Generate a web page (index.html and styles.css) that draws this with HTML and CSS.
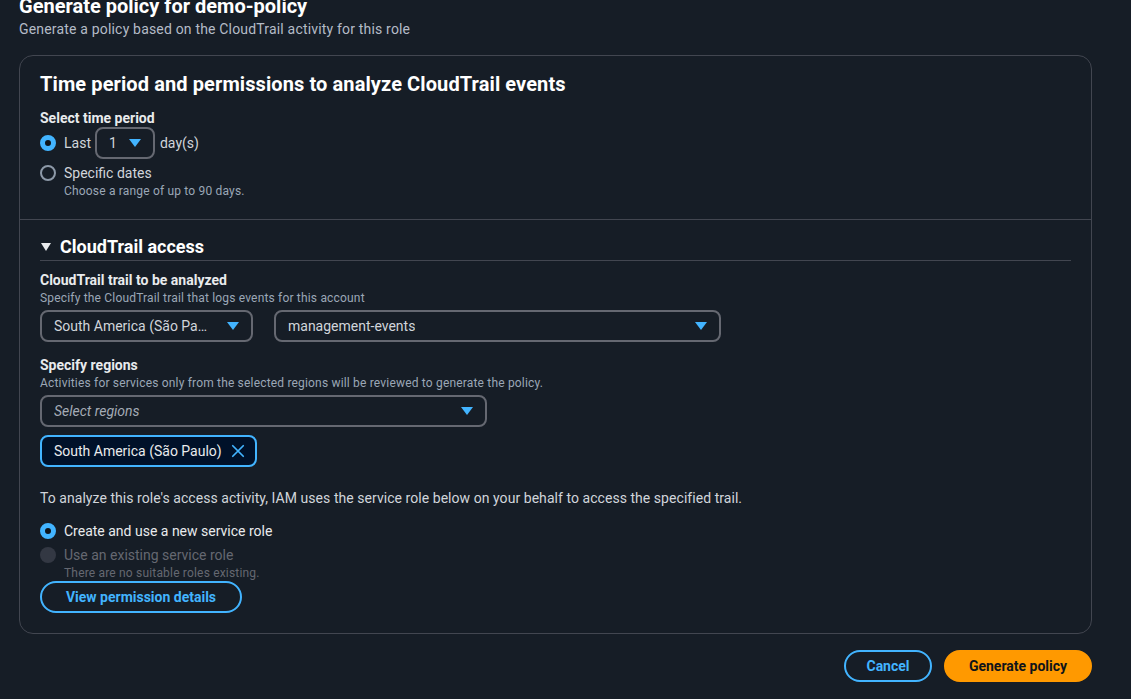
FILE: index.html
```html
<!DOCTYPE html>
<html lang="en">
<head>
<meta charset="utf-8">
<title>Generate policy</title>
<link rel="stylesheet" href="styles.css">
</head>
<body>
<div class="page">
  <header class="page-header">
    <h1 class="page-title">Generate policy for demo-policy</h1>
    <p class="page-desc">Generate a policy based on the CloudTrail activity for this role</p>
  </header>

  <section class="card">
    <div class="card-section">
      <h2 class="card-title">Time period and permissions to analyze CloudTrail events</h2>
      <div class="field">
        <div class="label">Select time period</div>
        <div class="radio-row">
          <span class="radio checked"></span>
          <span class="radio-text">Last</span>
          <span class="select select-small"><span class="select-value">1</span><span class="caret"></span></span>
          <span class="radio-text">day(s)</span>
        </div>
        <div class="radio-block">
          <div class="radio-line">
            <span class="radio"></span>
            <span class="radio-text">Specific dates</span>
          </div>
          <div class="radio-desc">Choose a range of up to 90 days.</div>
        </div>
      </div>
    </div>

    <div class="card-section second">
      <div class="expand-header">
        <span class="expand-caret"></span>
        <span class="expand-title">CloudTrail access</span>
      </div>

      <div class="field gap-top-8">
        <div class="label">CloudTrail trail to be analyzed</div>
        <div class="desc">Specify the CloudTrail trail that logs events for this account</div>
        <div class="select-row">
          <span class="select select-region"><span class="select-value">South America (São Pa…</span><span class="caret"></span></span>
          <span class="select select-trail"><span class="select-value">management-events</span><span class="caret"></span></span>
        </div>
      </div>

      <div class="field gap-top-12">
        <div class="label">Specify regions</div>
        <div class="desc">Activities for services only from the selected regions will be reviewed to generate the policy.</div>
        <div class="select-row">
          <span class="select select-regions"><span class="select-value placeholder">Select regions</span><span class="caret"></span></span>
        </div>
        <div class="token">
          <span class="token-text">South America (São Paulo)</span>
          <svg class="token-x" width="16" height="16" viewBox="0 0 16 16"><path d="M2 2 L14 14 M14 2 L2 14" stroke="#42b4ff" stroke-width="2" fill="none" stroke-linecap="round"/></svg>
        </div>
      </div>

      <p class="body-text">To analyze this role's access activity, IAM uses the service role below on your behalf to access the specified trail.</p>

      <div class="radio-group">
        <div class="radio-line">
          <span class="radio checked"></span>
          <span class="radio-text strong">Create and use a new service role</span>
        </div>
        <div class="radio-block">
          <div class="radio-line">
            <span class="radio disabled"></span>
            <span class="radio-text muted">Use an existing service role</span>
          </div>
          <div class="radio-desc muted">There are no suitable roles existing.</div>
        </div>
      </div>
      <button class="btn btn-normal btn-details">View permission details</button>
    </div>
  </section>

  <div class="actions">
    <button class="btn btn-normal">Cancel</button>
    <button class="btn btn-primary">Generate policy</button>
  </div>
</div>
</body>
</html>
```

FILE: styles.css
```css
* { box-sizing: border-box; }
html, body { margin: 0; padding: 0; }
body {
  background: #161d26;
  font-family: Roboto, "Noto Sans", sans-serif;
  color: #d1d5db;
  font-size: 14px;
  line-height: 20px;
  overflow: hidden;
}
.page {
  padding: 0 39px 0 19px;
}
.page-header { margin-top: -6px; }
.page-title {
  margin: 0;
  font-size: 20px;
  line-height: 24px;
  font-weight: 700;
  color: #ffffff;
}
.page-desc {
  margin: 1px 0 0;
  font-size: 14px;
  line-height: 20px;
  color: #b4bbc6;
  letter-spacing: 0.18px;
}
.card {
  margin-top: 16px;
  border: 1px solid #424650;
  border-radius: 14px;
  background: #161d26;
}
.card-section {
  padding: 16px 20px 20px;
}
.card-section.second {
  border-top: 1px solid #424650;
  padding-top: 15px;
  padding-bottom: 20px;
}
.card-title {
  margin: 0;
  font-size: 20px;
  line-height: 24px;
  font-weight: 700;
  color: #ffffff;
  letter-spacing: 0.1px;
}
.field { display: flex; flex-direction: column; }
.card-title + .field { margin-top: 12px; }
.label {
  font-weight: 700;
  color: #e9ebed;
  font-size: 14px;
  line-height: 20px;
}
.desc {
  font-size: 12px;
  line-height: 16px;
  color: #9ba7b6;
  letter-spacing: 0.18px;
}
.radio-row {
  display: flex;
  align-items: center;
  height: 32px;
  margin-top: -1px;
}
.radio {
  width: 16px;
  height: 16px;
  border-radius: 50%;
  border: 2px solid #8d99a8;
  flex: none;
  margin-right: 8px;
}
.radio.checked {
  border: 5px solid #42b4ff;
  background: #0f141a;
}
.radio.disabled {
  border: none;
  background: #333843;
}
.radio-text { color: #d1d5db; }
.radio-text.strong { color: #e9ebed; }
.radio-row .radio-text:nth-of-type(2) { margin-right: 4px; }
.radio-row .select { margin-right: 5px; }
.radio-block { margin-top: 4px; }
.radio-line { display: flex; align-items: center; height: 20px; }
.radio-desc {
  padding-left: 24px;
  font-size: 12px;
  line-height: 16px;
  color: #9ba7b6;
  letter-spacing: 0.18px;
}
.muted { color: #656871 !important; }

.select {
  display: flex;
  align-items: center;
  justify-content: space-between;
  height: 32px;
  border: 2px solid #656871;
  border-radius: 8px;
  padding: 0 12px 0 12px;
  color: #d1d5db;
}
.select-small { width: 60px; padding: 0 12px; }
.select-region { width: 213px; }
.select-trail { width: 447px; }
.select-regions { width: 447px; }
.select-value { white-space: nowrap; overflow: hidden; }
.placeholder { font-style: italic; color: #a4abb5; }
.caret {
  width: 0;
  height: 0;
  border-left: 6px solid transparent;
  border-right: 6px solid transparent;
  border-top: 8px solid #42b4ff;
  flex: none;
  margin-left: 8px;
}
.select-row {
  display: flex;
  gap: 21px;
  margin-top: 4px;
}
.expand-header {
  display: flex;
  align-items: center;
  height: 26px;
  border-bottom: 1px solid #424650;
  padding-bottom: 2px;
}
.expand-caret {
  width: 0;
  height: 0;
  border-left: 5px solid transparent;
  border-right: 5px solid transparent;
  border-top: 8px solid #e9ebed;
  margin-right: 9px;
  margin-left: 1px;
}
.expand-title {
  font-size: 18px;
  line-height: 24px;
  font-weight: 700;
  color: #ffffff;
}
.gap-top-8 { margin-top: 9px; }
.gap-top-12 { margin-top: 13px; }
.token {
  margin-top: 8px;
  display: inline-flex;
  align-self: flex-start;
  align-items: center;
  height: 32px;
  padding: 0 10px 0 12px;
  border: 2px solid #42b4ff;
  border-radius: 8px;
  background: #001129;
  color: #e9ebed;
}
.token-x { margin-left: 9px; width: 14px; height: 14px; }
.body-text {
  margin: 21px 0 0;
  color: #d1d5db;
  letter-spacing: 0.05px;
}
.radio-group { margin-top: 13px; }
.radio-group .radio-block { margin-top: 4px; }
.btn {
  font-family: inherit;
  font-size: 14px;
  font-weight: 700;
  line-height: 20px;
  height: 32px;
  border-radius: 20px;
  padding: 0 20px;
  cursor: pointer;
}
.btn-normal {
  background: transparent;
  border: 2px solid #42b4ff;
  color: #42b4ff;
}
.btn-details { margin-top: 0; width: 202px; }
.btn-primary {
  background: #ff9900;
  border: 2px solid #ff9900;
  color: #0f141a;
}
.actions {
  display: flex;
  justify-content: flex-end;
  gap: 12px;
  margin-top: 16px;
}
.actions .btn-normal { width: 88px; padding: 0; }
.actions .btn-primary { width: 148px; padding: 0; }
```
